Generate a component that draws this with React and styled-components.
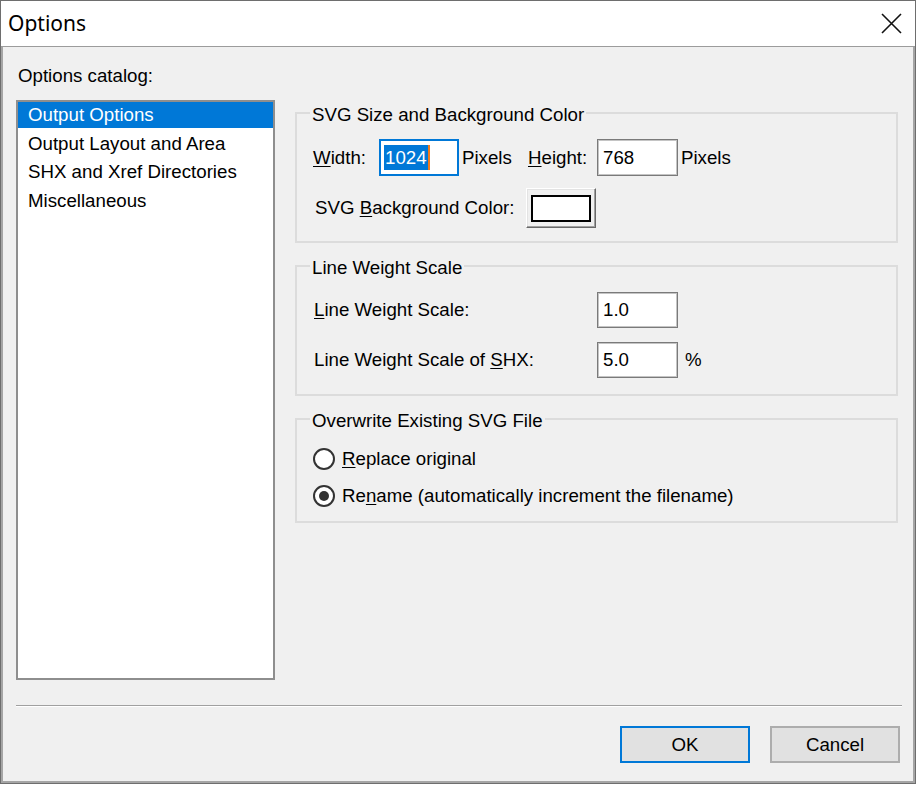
import React from 'react';
import styled, { createGlobalStyle } from 'styled-components';

const Global = createGlobalStyle`
  html, body { margin: 0; padding: 0; background: #ffffff; }
  body { font-family: "Liberation Sans", Arial, sans-serif; color: #000; }
  * { box-sizing: border-box; }
`;

const Window = styled.div`
  width: 916px;
  height: 784px;
  border: 1px solid #6e6e6e;
  display: flex;
  flex-direction: column;
  background: #fff;
`;

const TitleBar = styled.div`
  height: 46px;
  flex: none;
  display: flex;
  align-items: center;
  justify-content: space-between;
  padding: 0 13px 1px 7px;
  border-bottom: 1px solid #9c9c9c;
  background: #fff;
`;

const TitleText = styled.div`
  font-family: "Noto Sans", "Liberation Sans", sans-serif;
  font-size: 21px;
  color: #000;
`;

const Client = styled.div`
  flex: 1;
  display: flex;
  flex-direction: column;
  background: #f0f0f0;
  border: 2px solid #a5a5a5;
  border-top: none;
  font-size: 18.7px;
`;

const Main = styled.div`
  display: grid;
  grid-template-columns: 259px 1fr;
  grid-template-rows: 22px 580px;
  grid-template-areas: "label ." "list groups";
  column-gap: 20px;
  row-gap: 13px;
  padding: 18px 15px 0 13px;
`;

const CatalogLabel = styled.div`
  grid-area: label;
  line-height: 22px;
  padding-left: 2px;
`;

const ListBox = styled.ul`
  grid-area: list;
  margin: 0;
  padding: 0;
  list-style: none;
  background: #fff;
  border: 2px solid #8e8e8e;
`;

const ListItem = styled.li`
  height: 26px;
  margin-bottom: 2.5px;
  line-height: 26px;
  padding-left: 10px;
  white-space: nowrap;
  background: ${p => (p.$selected ? '#0078d7' : 'transparent')};
  color: ${p => (p.$selected ? '#fff' : '#000')};
`;

const Groups = styled.div`
  grid-area: groups;
  display: flex;
  flex-direction: column;
  gap: 10px;
  align-self: start;
`;

const Group = styled.fieldset`
  margin: 0;
  min-width: 0;
  border: 2px solid #dcdcdc;
  padding: ${p => p.$pt}px 14px ${p => p.$pb}px 16px;
`;

const Legend = styled.legend`
  padding: 4px 2px 0;
  margin-left: -3px;
  line-height: 22px;
  font-size: 18.7px;
`;

const Stack = styled.div`
  display: flex;
  flex-direction: column;
  gap: ${p => p.$gap}px;
`;

const Row = styled.div`
  display: flex;
  align-items: center;
  height: ${p => p.$h}px;
`;

const FieldLabel = styled.span`
  flex: none;
  width: ${p => p.$w}px;
  margin-left: ${p => p.$ml || 0}px;
  white-space: nowrap;
`;

const Key = styled.span`
  text-decoration: underline;
  text-underline-offset: 2px;
`;

const TextBox = styled.div`
  flex: none;
  width: ${p => p.$w}px;
  height: ${p => p.$h}px;
  background: #fff;
  display: flex;
  align-items: center;
  padding-left: ${p => (p.$focused ? 3 : 5)}px;
  border: ${p => (p.$focused ? '2px solid #0078d7' : '1px solid #7a7a7a')};
  box-shadow: ${p => (p.$focused ? 'none' : 'inset 0 0 0 1px #c4c4c4')};
`;

const Selection = styled.span`
  background: #0078d7;
  color: #fff;
  line-height: 25px;
  padding: 0 1px;
`;

const Caret = styled.span`
  width: 2px;
  height: 25px;
  background: #f07a1c;
`;

const Unit = styled.span`
  flex: none;
  margin-left: ${p => p.$ml}px;
  width: ${p => (p.$w ? `${p.$w}px` : 'auto')};
`;

const ColorButton = styled.button`
  flex: none;
  width: 70px;
  height: 40px;
  padding: 0;
  margin: 0;
  display: flex;
  align-items: center;
  justify-content: center;
  background: #f0f0f0;
  border: 1px solid;
  border-color: #ffffff #696969 #696969 #ffffff;
  box-shadow: inset -1px -1px 0 #a0a0a0, inset 1px 1px 0 #e3e3e3;
`;

const Swatch = styled.span`
  width: 60px;
  height: 27px;
  background: ${p => p.$color};
  border: 2px solid #000;
`;

const RadioCircle = styled.span`
  flex: none;
  width: 22px;
  height: 22px;
  border-radius: 50%;
  border: 2px solid #333;
  background: #fff;
  display: flex;
  align-items: center;
  justify-content: center;
  margin-right: 7px;
  &::after {
    content: "";
    width: 10px;
    height: 10px;
    border-radius: 50%;
    background: ${p => (p.$checked ? '#333' : 'transparent')};
  }
`;

const Separator = styled.div`
  margin: 25px 11px 0 13px;
  border-top: 1px solid #a0a0a0;
  border-bottom: 1px solid #ffffff;
`;

const ButtonRow = styled.div`
  display: flex;
  justify-content: flex-end;
  gap: 20px;
  margin-top: 19px;
  padding-right: 13px;
`;

const DialogButton = styled.button`
  width: 130px;
  height: 37px;
  padding: 0;
  margin: 0;
  font-family: "Liberation Sans", Arial, sans-serif;
  font-size: 18.7px;
  color: #000;
  background: #e1e1e1;
  border: 2px solid ${p => (p.$default ? '#0078d7' : '#adadad')};
`;

const CloseIcon = () => (
  <svg width="21" height="21" viewBox="0 0 21 21">
    <path d="M1 1 L20 20 M20 1 L1 20" stroke="#111" strokeWidth="1.6" fill="none" />
  </svg>
);

const catalog = [
  'Output Options',
  'Output Layout and Area',
  'SHX and Xref Directories',
  'Miscellaneous',
];

export default function App() {
  return (
    <>
      <Global />
      <Window>
        <TitleBar>
          <TitleText>Options</TitleText>
          <CloseIcon />
        </TitleBar>
        <Client>
          <Main>
            <CatalogLabel>Options catalog:</CatalogLabel>
            <ListBox>
              {catalog.map((c, i) => (
                <ListItem key={c} $selected={i === 0}>{c}</ListItem>
              ))}
            </ListBox>
            <Groups>
              <Group $pt={13} $pb={13}>
                <Legend>SVG Size and Background Color</Legend>
                <Stack $gap={12}>
                  <Row $h={37}>
                    <FieldLabel $w={66}><Key>W</Key>idth:</FieldLabel>
                    <TextBox $w={80} $h={37} $focused>
                      <Selection>1024</Selection>
                      <Caret />
                    </TextBox>
                    <Unit $ml={3} $w={66}>Pixels</Unit>
                    <FieldLabel $w={69}><Key>H</Key>eight:</FieldLabel>
                    <TextBox $w={81} $h={37}>768</TextBox>
                    <Unit $ml={3}>Pixels</Unit>
                  </Row>
                  <Row $h={40}>
                    <FieldLabel $w={211} $ml={2}>SVG <Key>B</Key>ackground Color:</FieldLabel>
                    <ColorButton>
                      <Swatch $color="#ffffff" />
                    </ColorButton>
                  </Row>
                </Stack>
              </Group>

              <Group $pt={13} $pb={16}>
                <Legend>Line Weight Scale</Legend>
                <Stack $gap={14}>
                  <Row $h={36}>
                    <FieldLabel $w={283} $ml={1}><Key>L</Key>ine Weight Scale:</FieldLabel>
                    <TextBox $w={81} $h={36}>1.0</TextBox>
                  </Row>
                  <Row $h={36}>
                    <FieldLabel $w={283} $ml={1}>Line Weight Scale of <Key>S</Key>HX:</FieldLabel>
                    <TextBox $w={81} $h={36}>5.0</TextBox>
                    <Unit $ml={7}>%</Unit>
                  </Row>
                </Stack>
              </Group>

              <Group $pt={12} $pb={10}>
                <Legend>Overwrite Existing SVG File</Legend>
                <Stack $gap={7}>
                  <Row $h={30}>
                    <RadioCircle />
                    <span><Key>R</Key>eplace original</span>
                  </Row>
                  <Row $h={30}>
                    <RadioCircle $checked />
                    <span>Re<Key>n</Key>ame (automatically increment the filename)</span>
                  </Row>
                </Stack>
              </Group>
            </Groups>
          </Main>
          <Separator />
          <ButtonRow>
            <DialogButton $default>OK</DialogButton>
            <DialogButton>Cancel</DialogButton>
          </ButtonRow>
        </Client>
      </Window>
    </>
  );
}
